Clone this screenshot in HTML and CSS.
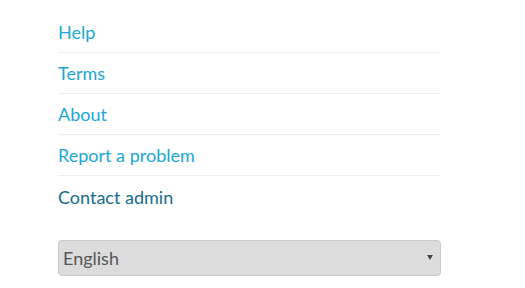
FILE: index.html
```html
<!DOCTYPE html>
<html lang="en">
<head>
    <meta charset="UTF-8">
    <title>Footer links</title>
    <link rel="stylesheet" href="styles.css">
</head>
<body>
    <div class="container">
        <ul class="links">
            <li><a href="#">Help</a></li>
            <li><a href="#">Terms</a></li>
            <li><a href="#">About</a></li>
            <li><a href="#">Report a problem</a></li>
            <li><a href="#" class="admin">Contact admin</a></li>
        </ul>

        <div class="lang">
            <select>
                <option>English</option>
            </select>
        </div>
    </div>
</body>
</html>
```

FILE: styles.css
```css
* {
    box-sizing: border-box;
    margin: 0;
    padding: 0;
}

body {
    font-family: Lato, 'Open Sans', sans-serif;
    background-color: #fff;
    color: #333;
}

.container {
    width: 383px;
    margin-left: 58px;
    padding-top: 12px;
}

.links {
    list-style-type: none;
}

.links li {
    height: 41px;
    display: flex;
    align-items: center;
    border-bottom: 1px solid #eceef2;
    font-size: 18px;
}

.links li:last-child {
    border-bottom: none;
}

.links a {
    color: #19a8d8;
    text-decoration: none;
}

.links a.admin {
    color: #136d8c;
}

.lang {
    position: relative;
    margin-top: 23px;
}

/* little solid arrow over the select */
.lang::after {
    content: "";
    position: absolute;
    right: 8px;
    top: 15px;
    border-left: 3px solid transparent;
    border-right: 3px solid transparent;
    border-top: 5px solid #444;
    pointer-events: none;
}

select {
    width: 100%;
    height: 36px;
    padding: 0 4px;
    font-family: Lato, 'Open Sans', sans-serif;
    font-size: 18px;
    color: #555;
    background-color: #dcdcdc;
    border: 1px solid #c8c8c8;
    border-radius: 4px;
    appearance: none;
}
```
